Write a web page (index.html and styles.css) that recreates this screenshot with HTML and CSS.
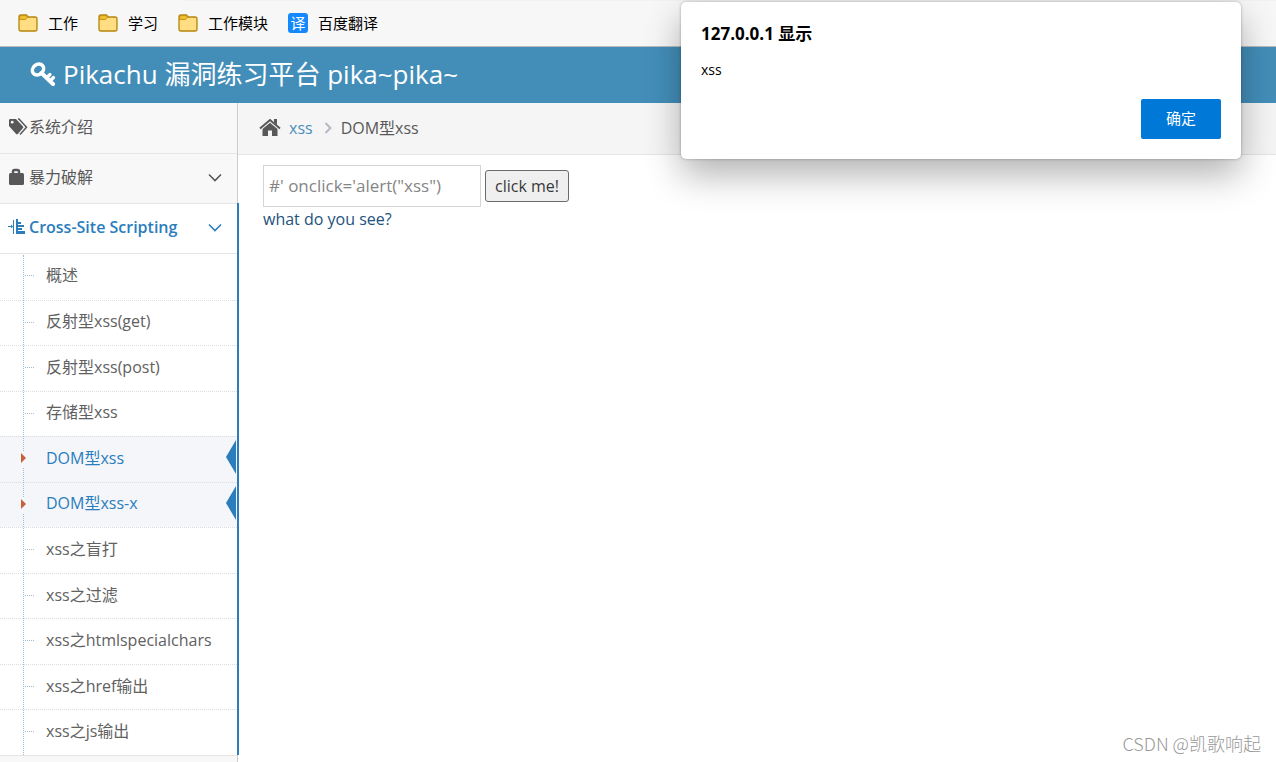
FILE: index.html
```
<!DOCTYPE html>
<html lang="zh-CN">
<head>
  <meta charset="UTF-8">
  <meta name="viewport" content="width=device-width, initial-scale=1.0">
  <title>Get the pikachu</title>
  <link rel="stylesheet" href="styles.css">
</head>
<body>
  <!-- shared icons -->
  <svg class="icon-defs" aria-hidden="true">
    <symbol id="folder" viewBox="0 0 20 18">
      <path d="M1 4.500V15a2 2 0 0 0 2 2h14a2 2 0 0 0 2-2V5a2 2 0 0 0-2-2h-7L8.500 1H3a2 2 0 0 0-2 2z" fill="#ffdd80" stroke="#b5860f" stroke-width="1.300"/>
      <path d="M1.600 5.500V3A1.400 1.400 0 0 1 3 1.600h5.200L9.500 3.200 7.500 5.500z" fill="#f2c12e" stroke="#b5860f" stroke-width="0.800"/>
    </symbol>
    <symbol id="chevron" viewBox="0 0 14 9">
      <path d="M1 1.500l6 6 6-6" fill="none" stroke="currentColor" stroke-width="1.600"/>
    </symbol>
  </svg>

  <nav class="bookmarks">
    <a class="bookmark" href="#"><svg class="bookmark-icon"><use href="#folder"/></svg>工作</a>
    <a class="bookmark" href="#"><svg class="bookmark-icon"><use href="#folder"/></svg>学习</a>
    <a class="bookmark" href="#"><svg class="bookmark-icon"><use href="#folder"/></svg>工作模块</a>
    <a class="bookmark" href="#"><span class="fanyi">译</span>百度翻译</a>
  </nav>

  <header class="navbar">
    <a class="brand" href="#">
      <svg class="key" viewBox="0 0 26 24">
        <ellipse cx="8" cy="7.500" rx="5" ry="6" transform="rotate(50 8 7.500)" fill="none" stroke="#fff" stroke-width="3.600"/>
        <path d="M11.500 11L23 22" stroke="#fff" stroke-width="4" stroke-linecap="round"/>
        <path d="M17 15.500l3-3M20.500 18.500l3-3" stroke="#fff" stroke-width="3.200" stroke-linecap="round"/>
      </svg>
      Pikachu 漏洞练习平台 pika~pika~
    </a>
  </header>

  <div class="container">
    <aside class="sidebar">
      <ul class="menu">
        <li class="item">
          <a class="item-link" href="#">
            <svg class="item-icon" viewBox="0 0 20 18">
              <path d="M1 2.200A1.200 1.200 0 0 1 2.200 1H8l7 7.500a1.200 1.200 0 0 1 0 1.600L9.800 16a1.200 1.200 0 0 1-1.700 0L1 8z" fill="#585858"/>
              <circle cx="4.200" cy="4.200" r="1.400" fill="#f8f8f8"/>
              <path d="M10 1h1l7.500 8.200-6.500 7.300" fill="none" stroke="#585858" stroke-width="1.500"/>
            </svg>系统介绍
          </a>
        </li>
        <li class="item">
          <a class="item-link" href="#">
            <svg class="item-icon" viewBox="0 0 20 18">
              <path d="M5 6V3.500a1.500 1.500 0 0 1 1.500-1.500h3a1.500 1.500 0 0 1 1.500 1.500V6" fill="none" stroke="#585858" stroke-width="2.400"/>
              <rect x="1" y="5" width="15" height="12" rx="1.500" fill="#585858"/>
            </svg>暴力破解
            <svg class="arrow"><use href="#chevron"/></svg>
          </a>
        </li>
        <li class="item open">
          <a class="item-link" href="#">
            <svg class="item-icon" viewBox="0 0 20 18" fill="#2b7dbc">
              <path d="M0 8h3V6.500L5 8.500 3 10.500V9H0zM5 2h1v14H5z"/>
              <path d="M8 1h2v15H8zM8 4h5v2H8zM8 7h8v2H8zM8 10h6v2H8zM8 13h9v3H8z"/>
            </svg>Cross-Site Scripting
            <svg class="arrow"><use href="#chevron"/></svg>
          </a>
          <ul class="submenu">
            <li class="sub"><a href="#">概述</a></li>
            <li class="sub"><a href="#">反射型xss(get)</a></li>
            <li class="sub"><a href="#">反射型xss(post)</a></li>
            <li class="sub"><a href="#">存储型xss</a></li>
            <li class="sub active"><a href="#">DOM型xss</a></li>
            <li class="sub active"><a href="#">DOM型xss-x</a></li>
            <li class="sub"><a href="#">xss之盲打</a></li>
            <li class="sub"><a href="#">xss之过滤</a></li>
            <li class="sub"><a href="#">xss之htmlspecialchars</a></li>
            <li class="sub"><a href="#">xss之href输出</a></li>
            <li class="sub"><a href="#">xss之js输出</a></li>
          </ul>
        </li>
      </ul>
    </aside>

    <main class="main">
      <div class="breadcrumbs">
        <svg class="home" viewBox="0 0 22 19" fill="#585858">
          <path d="M1 10.500L11 2l10 8.500" fill="none" stroke="#585858" stroke-width="2"/>
          <path d="M15 1h3v6l-3-2.500zM3.500 11L11 4.800l7.500 6.200V18H13v-5.500H9V18H3.500z"/>
        </svg>
        <a class="crumb" href="#">xss</a>
        <svg class="crumb-sep" viewBox="0 0 8 12"><path d="M1.500 1l5 5-5 5" fill="none" stroke="#b2b6bf" stroke-width="1.800"/></svg>
        <span>DOM型xss</span>
      </div>
      <div class="content">
        <div class="xss-form">
          <input class="text" id="text" type="text" aria-label="text" value="#' onclick='alert(&quot;xss&quot;)">
          <button class="click-me" id="button" type="button">click me!</button>
        </div>
        <a class="see" href="#">what do you see?</a>
      </div>
    </main>
  </div>

  <div class="dialog" role="alertdialog" aria-labelledby="dialog-title">
    <h2 class="dialog-title" id="dialog-title">127.0.0.1 显示</h2>
    <p class="dialog-text">xss</p>
    <button class="dialog-ok" type="button">确定</button>
  </div>

  <div class="watermark">CSDN @凯歌响起</div>
</body>
</html>
```

FILE: styles.css
```
* {
  box-sizing: border-box;
}
body {
  margin: 0;
  min-height: 100vh;
  display: flex;
  flex-direction: column;
  position: relative;
  background: #fff;
  color: #585858;
  font-family: "Open Sans", "Noto Sans CJK SC", sans-serif;
  font-size: 16px;
  line-height: 24px;
}
a {
  text-decoration: none;
  color: inherit;
}
ul {
  list-style: none;
  margin: 0;
  padding: 0;
}
.icon-defs {
  position: absolute;
  width: 0;
  height: 0;
}

/* bookmarks bar */
.bookmarks {
  position: relative;
  display: flex;
  align-items: center;
  gap: 20px;
  height: 47px;
  padding: 0 18px;
  background: #f7f7f7;
  border-bottom: 1px solid #b9bbbd;
}
/* lower edge of the address box */
.bookmarks::before {
  content: "";
  position: absolute;
  top: 0;
  left: 182px;
  right: 0;
  height: 1px;
  background: #f2f2f2;
}
.bookmark {
  display: flex;
  align-items: center;
  gap: 10px;
  color: #000;
  font-size: 15px;
}
.bookmark-icon {
  width: 20px;
  height: 18px;
}
.fanyi {
  width: 20px;
  height: 20px;
  border-radius: 3px;
  background: #1488fc;
  color: #fff;
  line-height: 20px;
  text-align: center;
}

/* header */
.navbar {
  display: flex;
  height: 56px;
  padding: 0 30px 2px;
  background: #438eb9;
}
.brand {
  display: flex;
  align-items: center;
  gap: 7px;
  color: #fff;
  font-size: 26px;
}
.key {
  width: 26px;
  height: 24px;
}

.container {
  display: flex;
  flex: 1;
}

/* sidebar */
.sidebar {
  width: 238px;
  background: #f8f8f8;
  border-right: 1px solid #ccc;
}
.item {
  border-bottom: 1px solid #e5e5e5;
}
.item-link {
  display: flex;
  align-items: center;
  height: 50px;
  padding: 0 15px 3px 8px;
}
.item-icon {
  width: 20px;
  height: 18px;
  margin-right: 1px;
}
.arrow {
  width: 14px;
  height: 9px;
  margin-left: auto;
}
.item + .item .item-link {
  height: 49px;
}
.open {
  position: relative;
  background: #fff;
}
.open::after {
  content: "";
  position: absolute;
  top: -1px;
  right: -2px;
  bottom: 0;
  width: 2px;
  background: #2b7dbc;
}
.open .item-link {
  color: #2b7dbc;
  font-weight: 600;
}

/* submenu */
.submenu {
  position: relative;
  display: grid;
  grid-auto-rows: 1fr;
  min-height: 502px;
  border-top: 1px solid #e5e5e5;
}
.submenu::before {
  content: "";
  position: absolute;
  top: 1px;
  bottom: 0;
  left: 23px;
  border-left: 1px dotted #9dbdd6;
  z-index: 1;
}
.sub {
  position: relative;
  display: flex;
  border-top: 1px dotted #ddd;
  color: #616161;
}
.sub:first-child {
  border-top: none;
}
.sub a {
  flex: 1;
  display: flex;
  align-items: center;
  padding: 0 0 3px 46px;
}
.sub::before {
  content: "";
  position: absolute;
  top: 21px;
  left: 25px;
  width: 9px;
  border-top: 1px dotted #9dbdd6;
}
.active {
  background: #f4f6fa;
  color: #2b7dbc;
}
.active::before {
  top: 14px;
  left: 21px;
  width: 5px;
  height: 16px;
  border: none;
  background: #f4f6fa;
  z-index: 2;
}
.active a::before {
  content: "";
  position: absolute;
  top: 16px;
  left: 21px;
  border: solid transparent;
  border-width: 5px 0 5px 5px;
  border-left-color: #c86139;
  z-index: 3;
}
.active::after {
  content: "";
  position: absolute;
  top: 3px;
  right: 1px;
  border: solid transparent;
  border-width: 17px 10px 17px 0;
  border-right-color: #2b7dbc;
}

/* content */
.main {
  flex: 1;
}
.breadcrumbs {
  display: flex;
  align-items: center;
  height: 52px;
  padding: 0 21px 2px;
  background: #f5f5f5;
  border-bottom: 1px solid #e5e5e5;
}
.home {
  width: 22px;
  height: 19px;
}
.crumb {
  margin: 0 11px 0 8px;
  color: #4c8fbd;
}
.crumb-sep {
  width: 8px;
  height: 12px;
  margin-right: 9px;
}
.content {
  padding: 10px 25px;
}
.xss-form {
  display: flex;
  align-items: center;
  gap: 4px;
}
.text {
  width: 218px;
  height: 42px;
  padding: 0 5px 2px;
  border: 1px solid #d5d5d5;
  color: #858585;
  font-family: inherit;
  font-size: 17px;
}
.click-me {
  height: 32px;
  padding: 0 9px;
  border: 1px solid #6b6b6b;
  border-radius: 3px;
  background: #efefef;
  color: #393939;
  font-family: inherit;
  font-size: 16px;
}
.see {
  color: #23527c;
}

/* alert box */
.dialog {
  position: absolute;
  top: 2px;
  right: 35px;
  width: 560px;
  padding: 20px;
  display: flex;
  flex-direction: column;
  border-radius: 5px;
  background: #fff;
  color: #000;
  box-shadow: 0 0 3px rgba(0, 0, 0, 0.3), 0 16px 36px rgba(0, 0, 0, 0.3);
}
.dialog-title {
  margin: 0;
  font-size: 17px;
  line-height: 24px;
}
.dialog-text {
  margin: 12px 0 17px;
  font-size: 14px;
}
.dialog-ok {
  align-self: flex-end;
  width: 80px;
  height: 40px;
  padding: 0 0 3px;
  border: none;
  border-radius: 2px;
  background: #0078d7;
  color: #fff;
  font-family: inherit;
  font-size: 15px;
}

.watermark {
  position: absolute;
  right: 15px;
  bottom: 7px;
  color: #999;
  font-family: "Noto Sans CJK SC", sans-serif;
  font-size: 18px;
  font-weight: 300;
}
```
